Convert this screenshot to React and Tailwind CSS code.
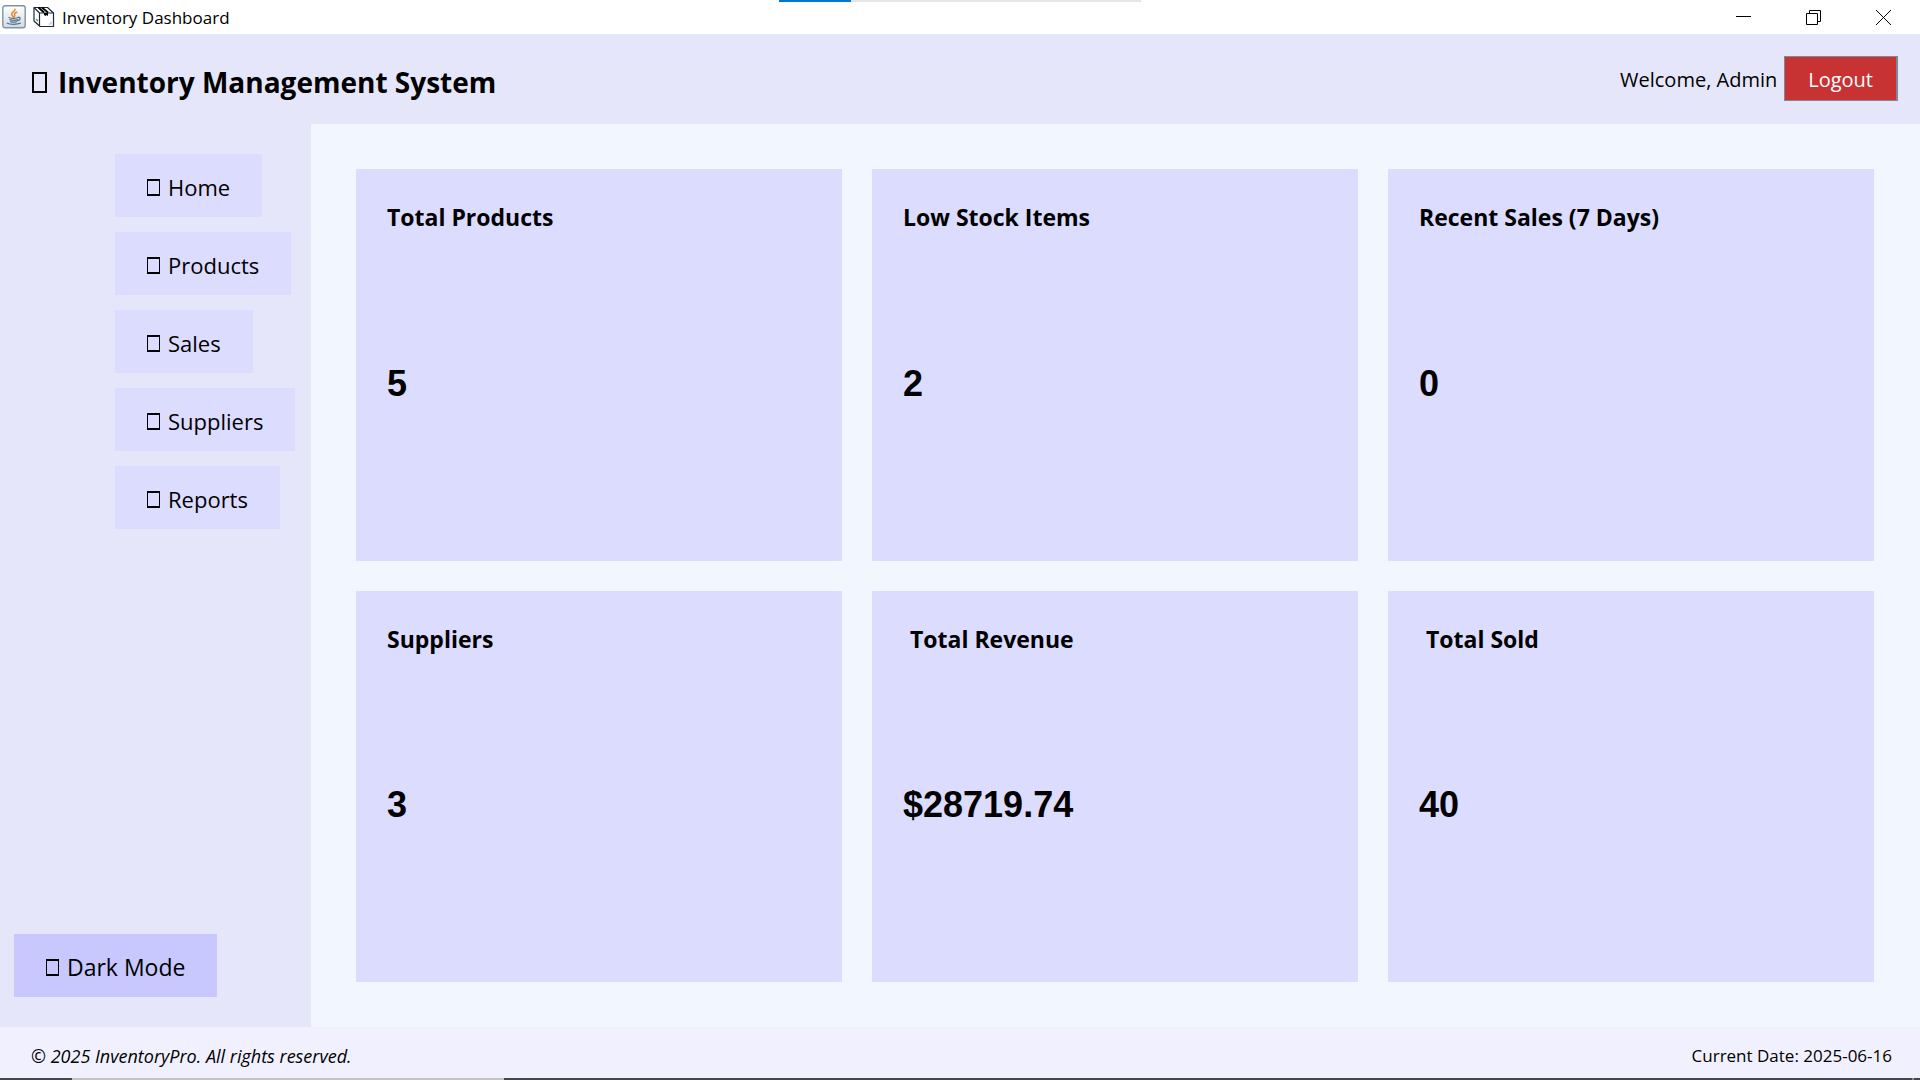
import React from "react";

const navItems = ["Home", "Products", "Sales", "Suppliers", "Reports"];

const stats = [
  { title: "Total Products", value: "5" },
  { title: "Low Stock Items", value: "2" },
  { title: "Recent Sales (7 Days)", value: "0" },
  { title: "Suppliers", value: "3" },
  { title: "Total Revenue", value: "$28719.74", indent: true },
  { title: "Total Sold", value: "40", indent: true },
];

function JavaIcon() {
  return (
    <svg width="24" height="24" viewBox="0 0 24 24" fill="none" aria-hidden="true">
      <defs>
        <linearGradient id="java-tile" x1="0" y1="0" x2="0" y2="1">
          <stop offset="0" stopColor="#ffffff" />
          <stop offset="1" stopColor="#d3dae0" />
        </linearGradient>
      </defs>
      <rect x="0.8" y="0.8" width="22.4" height="21.9" rx="2.2" fill="url(#java-tile)" stroke="#7f94a6" strokeWidth="1.4" />
      <path d="M13 4.2c.6 2-3.600 2.800-3.400 5 .1 1 1.300 1.600 1.500 2.800M14.800 7.200c-1.800.6-2.800 1.400-2.200 2.500.5.900.1 1.600-.4 2.200" stroke="#e8842c" strokeWidth="1.500" strokeLinecap="round" />
      <path d="M7 12.500c2.500 1 6.500 1 9 0M7.800 14.600c2.400.9 5.600.9 7.800 0M8.600 16.600c2 .7 4.200.7 6 0M16.200 12.300c2.600-.4 2.600 2.500-.2 3.300M5.300 18.200c2.600 1.400 9.800 1.500 13 0" stroke="#54738f" strokeWidth="1.300" strokeLinecap="round" />
    </svg>
  );
}

function PackageIcon() {
  return (
    <svg width="22" height="22" viewBox="0 0 22 22" fill="none" aria-hidden="true">
      <path d="M1 1.500H14.500L20.500 7V20.500H7L1 15Z" fill="#fff" stroke="#1f2937" strokeWidth="1.200" strokeLinejoin="round" />
      <path d="M6.500 7H20.500M6.500 7V20M1 1.500L6.500 7" stroke="#1f2937" strokeWidth="1.200" />
      <path d="M5.500 1.500L11 6.500M9 1.500L15 6.500" stroke="#000" strokeWidth="1.800" />
      <path d="M11 7H15V10L13.500 9L12.500 10L11 9Z" fill="#000" />
      <path d="M3 13l2 2" stroke="#45a06c" strokeWidth="1.200" />
      <path d="M15.500 18h3M18 15.500v2" stroke="#b9bfdd" strokeWidth="1.200" />
    </svg>
  );
}

function MissingGlyph({ large }) {
  return (
    <span
      aria-hidden="true"
      className={
        large
          ? "h-[21px] w-[15px] shrink-0 border-2 border-black"
          : "h-[17px] w-[13px] shrink-0 border-x border-y-2 border-black"
      }
    />
  );
}

function TitleBar() {
  return (
    <div className="relative flex h-[34px] items-center justify-between bg-white pl-0.5">
      <div className="flex items-center gap-[7px]">
        <JavaIcon />
        <PackageIcon />
        <span className="pt-0.5 text-[17px] leading-6">Inventory Dashboard</span>
      </div>
      <div className="flex h-full pr-0.5">
        <button type="button" aria-label="Minimize" className="grid w-[70px] place-items-center">
          <svg width="15" height="15" viewBox="0 0 15 15" stroke="#000"><path d="M0 6.500H15" /></svg>
        </button>
        <button type="button" aria-label="Restore" className="grid w-[70px] place-items-center">
          <svg width="15" height="15" viewBox="0 0 15 15" stroke="#000" fill="none">
            <path d="M.5 3.500H11.500V14.500H.5ZM3.500 3.500V.5H14.500V11.500H11.500" />
          </svg>
        </button>
        <button type="button" aria-label="Close" className="grid w-[70px] place-items-center">
          <svg width="15" height="15" viewBox="0 0 15 15" stroke="#000" fill="none"><path d="M0 0L15 15M15 0L0 15" /></svg>
        </button>
      </div>
      <div className="absolute top-0 left-1/2 flex h-0.5 w-[362px] -translate-x-1/2 bg-[#e5e5e5]">
        <div className="w-1/5 bg-[#0078d7]" />
      </div>
    </div>
  );
}

function StatCard({ title, value, indent }) {
  return (
    <section className="flex flex-col bg-[#dcdcff] px-[31px] pt-[30px] pb-7">
      <h2 className={indent ? "pl-[7px] text-[23px] leading-9 font-bold" : "text-[23px] leading-9 font-bold"}>{title}</h2>
      <p className="flex flex-1 items-center font-['Liberation_Sans',Arial,sans-serif] text-4xl font-bold">{value}</p>
    </section>
  );
}

export default function App() {
  return (
    <div className="flex min-h-screen flex-col bg-[#f2f6ff] font-['Open_Sans','Noto_Sans',sans-serif] text-black">
      <TitleBar />
      <header className="flex h-[90px] items-center justify-between bg-[#e6e6fa] pr-[22px] pl-8">
        <h1 className="flex items-center gap-[11px] pt-1.5 text-[28px] leading-9 font-bold">
          <MissingGlyph large />
          Inventory Management System
        </h1>
        <div className="flex items-center gap-[7px] pb-0.5 text-xl">
          <span className="pt-1">Welcome, Admin</span>
          <button type="button" className="h-[45px] border border-r-2 border-[#7a8a99] bg-[#c83232] px-[23px] pt-1 text-white">
            Logout
          </button>
        </div>
      </header>
      <div className="flex flex-1">
        <aside className="flex w-[311px] shrink-0 flex-col justify-between bg-[#e6e6fa] py-[30px]">
          <nav className="flex flex-col items-start gap-[15px] pl-[115px]">
            {navItems.map((item) => (
              <button key={item} type="button" className="flex h-[63px] items-center gap-2 bg-[#dcdcff] px-8 pt-1 text-[22px]">
                <MissingGlyph />
                {item}
              </button>
            ))}
          </nav>
          <div className="pl-3.5">
            <button type="button" className="flex h-[63px] items-center gap-2 bg-[#c8c8ff] px-8 pt-1 text-[23px]">
              <MissingGlyph />
              Dark Mode
            </button>
          </div>
        </aside>
        <main className="grid flex-1 grid-cols-3 grid-rows-2 gap-[30px] py-[45px] pr-[46px] pl-[45px]">
          {stats.map((s) => (
            <StatCard key={s.title} {...s} />
          ))}
        </main>
      </div>
      <footer className="flex h-[51px] items-center justify-between bg-[#f0f0ff] pt-1.5 pr-7 pl-[31px]">
        <span className="text-lg italic">© 2025 InventoryPro. All rights reserved.</span>
        <span className="text-[17px]">Current Date: 2025-06-16</span>
      </footer>
      <div className="flex h-0.5 bg-[#46464f]">
        <div className="ml-[72px] w-[432px] bg-[#c3c3c0]" />
        <div className="mr-1.5 ml-auto w-0.5 bg-[#8c8c90]" />
      </div>
    </div>
  );
}
